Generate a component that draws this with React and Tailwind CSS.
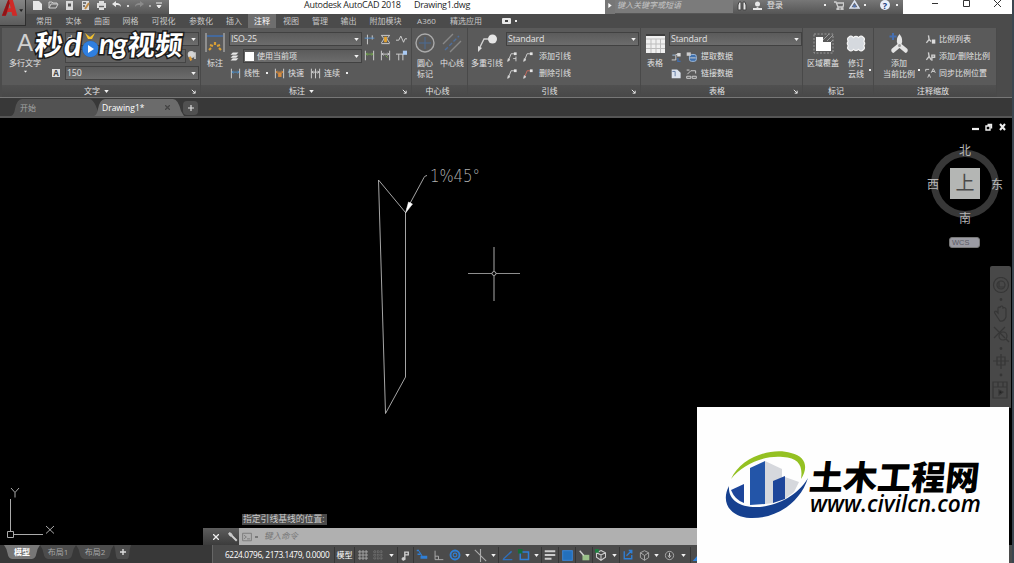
import { clsx } from "clsx";

const TABS = [
  ["常用", "w-[30px]"],
  ["实体", "w-[29px]"],
  ["曲面", "w-[28px]"],
  ["网格", "w-[29px]"],
  ["可视化", "w-[37px]"],
  ["参数化", "w-[38px]"],
  ["插入", "w-[28px]"],
  ["注释", "w-[28px]"],
  ["视图", "w-[30px]"],
  ["管理", "w-[28px]"],
  ["输出", "w-[29px]"],
  ["附加模块", "w-[45px]"],
  ["A360", "w-[37px]"],
  ["精选应用", "w-[42px]"],
];

function Ic({ className = "size-3", box = "0 0 16 16", children }) {
  return (
    <svg viewBox={box} className={clsx("shrink-0", className)} fill="none" stroke="#cfcfcf" strokeWidth="1.4">
      {children}
    </svg>
  );
}

function Caret({ className }) {
  return (
    <svg viewBox="0 0 6 4" className={clsx("h-[3px] w-[5px] shrink-0", className)}>
      <path d="M0 0h6L3 4z" fill="#f2f2f2" />
    </svg>
  );
}

function Corner() {
  return (
    <svg viewBox="0 0 6 6" className="size-[5px] shrink-0">
      <path d="M1 1l4 4M5 2v3H2" stroke="#e5e5e5" strokeWidth="1.2" fill="none" />
    </svg>
  );
}

function Combo({ className, children }) {
  return (
    <div
      className={clsx(
        "flex h-[14px] shrink-0 items-center border border-[#414141] bg-linear-to-b from-[#5b5b5b] to-[#6c6c6c] pl-px pr-[2px]",
        className
      )}
    >
      {children}
      <Caret className="ml-auto" />
    </div>
  );
}

function Style({ children }) {
  return <span className="text-[8.8px] tracking-[-0.02em]">{children}</span>;
}

function Panel({ width, title, menu, corner, children }) {
  return (
    <section className={clsx("flex h-full shrink-0 flex-col border-r border-[#494949]", width)}>
      <div className="flex h-[57px] bg-[#5a5a5a]">{children}</div>
      <div className="flex flex-1 items-center bg-linear-to-b from-[#505050] to-[#484848] pr-1">
        <div className="flex flex-1 items-center justify-center gap-1">
          {title}
          {menu && <Caret />}
        </div>
        {corner && <Corner />}
      </div>
    </section>
  );
}

function Big({ className, icon, lines, caret }) {
  return (
    <div className={clsx("flex shrink-0 flex-col items-center pt-1", className)}>
      <div className="flex h-[22px] items-center">{icon}</div>
      <div className="mt-[3px] text-center leading-[11px] whitespace-nowrap">
        {lines.map((l) => (
          <div key={l}>{l}</div>
        ))}
      </div>
      {caret && <Caret className="mt-[2px] scale-75" />}
    </div>
  );
}

function DimIcon({ accent = "#4d8fc9", className, children }) {
  return (
    <Ic className={clsx("size-[11px]", className)}>
      <path d="M2 1v14M14 1v14" />
      <path d="M3 6h10M5 4L3 6l2 2M11 4l2 2-2 2" stroke={accent} />
      {children}
    </Ic>
  );
}

function LeaderIcon({ red, bars }) {
  return (
    <Ic className="size-[11px]">
      <path d="M2 14L6 4h4" stroke={red ? "#c96b5d" : "#cfcfcf"} />
      <path d="M1 15l1-4 2 2z" fill="#e5e5e5" />
      <rect x="10" y="2" width="4" height="4" fill="#e5e5e5" stroke="none" />
      {bars && <path d="M13 8v7M9 11h4" />}
    </Ic>
  );
}

function QuickAccess() {
  return (
    <div className="flex h-full w-[144px] items-start gap-[5px] pt-px pl-[7px]">
      <Ic className="h-[9px] w-[11px]" box="0 0 11 9">
        <path d="M1 0h6l3 3v6H1z" fill="#e8e8e8" stroke="none" />
      </Ic>
      <Ic className="h-[8px] w-[11px]" box="0 0 11 8">
        <path d="M1 7V1h3l1 1h4v1M1 7l2-4h7L8 7z" strokeWidth="1" />
      </Ic>
      <Ic className="h-[9px] w-[11px]" box="0 0 11 9">
        <path d="M2 0h7v9H2z" fill="#dadada" stroke="none" />
        <path d="M4 4h3" stroke="#555" strokeWidth="3" />
      </Ic>
      <Ic className="h-[9px] w-[11px]" box="0 0 11 9">
        <path d="M2 0h7v9H2z" fill="#dadada" stroke="none" />
        <path d="M3 2h3M3 5h2" stroke="#555" />
        <path d="M5 8l4-6" stroke="#c08b45" strokeWidth="2" />
      </Ic>
      <Ic className="h-[9px] w-[11px]" box="0 0 11 9">
        <path d="M3 0h5v2h2v5H8v2H3V7H1V2h2z" fill="#dedede" stroke="none" />
        <path d="M3 5.500h5" stroke="#666" />
      </Ic>
      <Ic className="h-[8px] w-[10px]" box="0 0 10 8">
        <path d="M4 0L0 3l4 3V4c2 0 4 0 5 2 0-3-2-4-5-4z" fill="#e8e8e8" stroke="none" />
      </Ic>
      <span className="mt-1 size-[2px] bg-[#ddd]" />
      <Ic className="h-[8px] w-[10px]" box="0 0 10 8">
        <path d="M6 0l4 3-4 3V4C4 4 2 4 1 6c0-3 2-4 5-4z" fill="#8b8b8b" stroke="none" />
      </Ic>
      <span className="mt-1 size-[2px] bg-[#aaa]" />
      <Ic className="h-[8px] w-[6px]" box="0 0 6 8">
        <path d="M0 2h6M1 4.500h4L3 7z" fill="#eee" stroke="#eee" strokeWidth="1" />
      </Ic>
    </div>
  );
}

function TitleBar() {
  return (
    <header className="flex h-[14px] shrink-0 bg-linear-to-b from-[#777] to-[#555] pl-[25px]">
      <QuickAccess />
      <div className="flex w-[436px] bg-white pl-[135px] text-[9px] leading-[9px] whitespace-pre text-[#252525]">
        <span className="w-[110px] tracking-[-0.03em]">Autodesk AutoCAD 2018</span>
        <span className="tracking-[-0.035em]">Drawing1.dwg</span>
      </div>
      <div className="flex w-[298px] items-start">
        <div className="flex h-full w-[10px] justify-center bg-[#777] pt-[3px]">
          <svg viewBox="0 0 4 6" className="h-[5px] w-[4px]"><path d="M0 0l4 3-4 3z" fill="#fff" /></svg>
        </div>
        <div className="h-[13px] w-[118px] bg-[#7b7b7b] pl-[2px] leading-[10px] text-[#c5c5c5] italic">键入关键字或短语</div>
        <Ic className="mt-px ml-[4px] h-[10px] w-[10px]" box="0 0 10 10">
          <path d="M1 9V4l1-3h2v8zM9 9V4L8 1H6v8z" fill="#e6e6e6" stroke="#444" strokeWidth="1" />
        </Ic>
        <Ic className="mt-px ml-[6px] h-[10px] w-[9px]" box="0 0 9 10">
          <circle cx="4.500" cy="3" r="2.500" fill="#e6e6e6" stroke="none" />
          <path d="M0 9V7h3l1.500-1L6 7h3v2z" fill="#e6e6e6" stroke="none" />
        </Ic>
        <span className="ml-[5px] w-[57px] leading-[10px] text-[#e4e4e4]">登录</span>
        <span className="mt-[4px] size-[2px] bg-[#eee]" />
        <Ic className="mt-px ml-[8px] h-[9px] w-[10px]" box="0 0 10 9">
          <path d="M0 1h2l2 5h5l1-4H3" strokeWidth="1.300" />
          <circle cx="4" cy="8" r="1" /><circle cx="8" cy="8" r="1" />
        </Ic>
        <Ic className="ml-[5px] h-[10px] w-[11px]" box="0 0 11 10">
          <path d="M5.500 1L10 8H1z" stroke="#dfe6f4" strokeWidth="1.500" />
          <circle cx="5.500" cy="6" r="1.500" fill="#5574b0" stroke="none" />
        </Ic>
        <span className="mt-[4px] ml-[4px] size-[2px] bg-[#eee]" />
        <span className="ml-[14px] flex size-[10px] items-center justify-center rounded-full bg-[#e9eef8] text-[9px] leading-none font-bold text-[#23407e]">?</span>
        <span className="mt-[4px] ml-[6px] size-[2px] bg-[#eee]" />
      </div>
      <div className="flex w-[109px] items-start gap-[24px] bg-white pl-[29px] text-[#333]">
        <svg viewBox="0 0 7 8" className="h-[8px] w-[7px]"><path d="M0 3.500h6" stroke="currentColor" /></svg>
        <svg viewBox="0 0 7 8" className="h-[8px] w-[7px]"><path d="M.5.500h6v6h-6z" stroke="currentColor" fill="none" /></svg>
        <svg viewBox="0 0 7 8" className="h-[8px] w-[7px]"><path d="M0 0l7 7M7 0L0 7" stroke="currentColor" /></svg>
      </div>
    </header>
  );
}

function RibbonTabs() {
  return (
    <nav className="flex h-[14px] shrink-0 items-center bg-[#4b4b4b] pl-[29px] text-[#c9c9c9]">
      {TABS.map(([name, w]) => (
        <span
          key={name}
          className={clsx(
            "flex h-full shrink-0 items-center justify-center whitespace-nowrap",
            w,
            name === "注释" && "bg-[#6e6e6e] text-white"
          )}
        >
          {name}
        </span>
      ))}
      <Ic className="ml-[15px] h-[6px] w-[9px]" box="0 0 9 6">
        <rect width="9" height="6" rx="1" fill="#e8e8e8" stroke="none" />
        <rect x="3" y="2" width="3" height="2" fill="#444" stroke="none" />
      </Ic>
      <span className="ml-[4px] size-[2px] bg-[#eee]" />
    </nav>
  );
}

function Ribbon() {
  return (
    <div className="flex h-[70px] shrink-0 border-b border-[#777] bg-[#4b4b4b] pl-[2px]">
      <Panel width="w-[199px]" title="文字" menu corner>
        <Big
          className="w-[46px]"
          icon={<span className="font-['Liberation_Sans'] text-[24px] leading-none text-[#d0d0d0]">A</span>}
          lines={["多行文字"]}
          caret
        />
        <div className="flex flex-col gap-[3px] pt-[4px] pl-px">
          <div className="flex pl-[16px]">
            <Combo className="w-[134px] pl-[32px]"><Style>d</Style></Combo>
          </div>
          <div className="flex items-center pl-[16px]">
            <div className="h-[14px] w-[121px] border border-[#454545] bg-[#626262]" />
            <Ic className="size-[12px]">
              <circle cx="7" cy="6" r="4" fill="#d6d6d6" />
              <path d="M5 9l2 5" stroke="#d89a39" strokeWidth="3" />
              <path d="M12 3v9" stroke="#ddd" strokeWidth="2" />
            </Ic>
          </div>
          <div className="flex items-center">
            <span className="mr-[5px] ml-[3px] flex size-[8px] items-center justify-center bg-[#e0e0e0] text-[8px] leading-none font-bold text-[#444]">A</span>
            <Combo className="w-[134px] pl-[2px]"><Style>150</Style></Combo>
          </div>
        </div>
      </Panel>

      <Panel width="w-[211px]" title="标注" menu corner>
        <Big
          className="w-[28px]"
          icon={
            <Ic className="h-[20px] w-[20px]" box="0 0 20 20">
              <path d="M1 0v19M19 0v19" stroke="#a5a5a5" />
              <path d="M2 3h16" stroke="#44699c" strokeWidth="2" />
              <path d="M4 17l2-2M5 12l3 1M10 9v3M15 12l-3 1M16 17l-2-2" stroke="#d9a036" strokeWidth="2.200" />
            </Ic>
          }
          lines={["标注"]}
        />
        <div className="flex w-[133px] flex-col gap-[3px] pt-[4px]">
          <Combo className="w-[133px]"><Style>ISO-25</Style></Combo>
          <div className="flex items-center">
            <Ic className="mr-[4px] ml-[1px] size-[9px]">
              <path d="M5 1h10l-4 4H1zM5 6h10l-4 4H1zM5 11h10l-4 4H1z" fill="#e8e8e8" stroke="none" />
            </Ic>
            <Combo className="w-[119px]">
              <span className="mr-[3px] size-[9px] bg-white" />使用当前项
            </Combo>
          </div>
          <div className="flex h-[14px] items-center whitespace-nowrap">
            <DimIcon className="mr-[3px] ml-px" />线性
            <span className="mx-[6px] size-[2px] bg-[#eee]" />
            <DimIcon accent="#d88b3c" className="mr-[3px]"><rect x="6" y="7" width="5" height="6" fill="#d88b3c" stroke="none" /></DimIcon>快速
            <DimIcon accent="#cfcfcf" className="mr-[3px] ml-[6px]"><path d="M8 1v14" /></DimIcon>连续
            <span className="ml-[6px] size-[2px] bg-[#eee]" />
          </div>
        </div>
        <div className="grid h-[36px] grid-cols-3 grid-rows-2 items-center gap-x-[5px] pt-[3px] pl-[2px]">
          <Ic className="size-[11px]"><path d="M5 1v14M12 2v6" /><path d="M1 6h14" stroke="#5b94cf" /></Ic>
          <Ic className="size-[11px]">
            <path d="M2 2h12M2 14h12M2 2l4 5-4 6M14 2l-4 5 4 6" />
            <rect x="6" y="4" width="4" height="8" fill="#e5a32d" stroke="none" />
          </Ic>
          <Ic className="size-[11px]"><path d="M0 9h4l3-6 4 9 2-5h3" /></Ic>
          <DimIcon accent="#74a84d" />
          <DimIcon accent="#cfcfcf"><path d="M8 8l3 3" stroke="#74a84d" /></DimIcon>
          <Ic className="size-[11px]">
            <path d="M0 6h11M4 6v9M10 6v9" />
            <rect x="10" y="1" width="6" height="6" fill="#a9c9f2" stroke="none" />
          </Ic>
        </div>
      </Panel>

      <Panel width="w-[56px]" title="中心线">
        <Big
          className="w-[26px]"
          icon={
            <Ic className="size-[20px]" box="0 0 20 20">
              <circle cx="10" cy="10" r="9" stroke="#aaa" />
              <path d="M10 4v12M4 10h12" stroke="#4b6a94" strokeWidth="1" />
            </Ic>
          }
          lines={["圆心", "标记"]}
        />
        <Big
          className="w-[28px]"
          icon={
            <Ic className="h-[20px] w-[20px]" box="0 0 20 20">
              <path d="M1 11L11 1M8 19L19 8" stroke="#888" />
              <path d="M3 17L17 3" stroke="#4f6f9c" strokeDasharray="4 2" />
            </Ic>
          }
          lines={["中心线"]}
        />
      </Panel>

      <Panel width="w-[173px]" title="引线" corner>
        <Big
          className="w-[38px]"
          icon={
            <Ic className="h-[20px] w-[22px]" box="0 0 22 20">
              <path d="M3 16L8 6h6" />
              <path d="M2 19l0-6 4 2z" fill="#ddd" stroke="none" />
              <circle cx="16.500" cy="6" r="4.500" fill="#e6e6e6" stroke="none" />
            </Ic>
          }
          lines={["多重引线"]}
        />
        <div className="flex flex-col gap-[3px] pt-[4px]">
          <Combo className="w-[133px]"><Style>Standard</Style></Combo>
          <div className="flex h-[14px] items-center gap-[5px] pl-px"><LeaderIcon bars /><LeaderIcon /><span>添加引线</span></div>
          <div className="flex h-[14px] items-center gap-[5px] pl-px"><LeaderIcon /><LeaderIcon red /><span>删除引线</span></div>
        </div>
      </Panel>

      <Panel width="w-[162px]" title="表格" corner>
        <Big
          className="w-[28px]"
          icon={
            <Ic className="size-[19px]" box="0 0 19 19">
              <path d="M0 0h19v19H0z" fill="#f0f0f0" stroke="none" />
              <path d="M0 5h19M0 10h19M0 14.500h19M5 5v14M10 5v14M14.500 5v14" stroke="#bdbdbd" strokeWidth="1" />
              <path d="M0 1h19" stroke="#3e3e3e" strokeWidth="2" />
            </Ic>
          }
          lines={["表格"]}
        />
        <div className="flex flex-col gap-[3px] pt-[4px]">
          <Combo className="w-[133px]"><Style>Standard</Style></Combo>
          <div className="flex h-[14px] items-center gap-[4px] pl-[2px]">
            <Ic className="size-[11px]"><path d="M1 13h6V5h6" /><rect x="9" y="3" width="5" height="5" fill="#ddd" stroke="none" /><path d="M2 6h4" stroke="#9bbbe0" /><path d="M10 10v5h4" stroke="#426caa" strokeWidth="2" /></Ic>
            <Ic className="size-[11px]"><rect x="5" y="5" width="10" height="10" rx="3" fill="#3f70ad" stroke="#9ebce0" /><path d="M1 2h6v5H1z" fill="#ccc" stroke="none" /><path d="M6 10h8" /></Ic>
            <span>提取数据</span>
          </div>
          <div className="flex h-[14px] items-center gap-[4px] pl-[2px]">
            <Ic className="size-[11px]"><path d="M1 2h8l5 5v8H1z" fill="#dce3ee" stroke="none" /><path d="M2 5h4v7" stroke="#647da6" /></Ic>
            <Ic className="size-[11px]"><path d="M1 12h6v3H1zM9 12h6v3H9zM2 9l5-5h7v4" /><path d="M1 3h4" /></Ic>
            <span>链接数据</span>
          </div>
        </div>
      </Panel>

      <Panel width="w-[71px]" title="标记">
        <Big
          className="w-[40px]"
          icon={
            <Ic className="size-[21px]" box="0 0 21 21">
              <rect x="1" y="1" width="19" height="19" stroke="#999" strokeWidth="1" strokeDasharray="2 1.500" />
              <path d="M10 7l6-6M14 8l6-6M17 10l3-3" stroke="#999" strokeWidth="1" />
              <path d="M3 4h7v5h8v9H3z" fill="#fff" stroke="none" />
            </Ic>
          }
          lines={["区域覆盖"]}
        />
        <Big
          className="w-[26px]"
          icon={
            <Ic className="h-[17px] w-[20px]" box="0 0 20 17">
              <path
                d="M3 2q2-2 4.500.6 2.500-2.600 5 0 2.500-2.600 4.500-.6 2.500 1.500.7 4.200 2 2.300 0 4.600 1.800 2.700-.7 4.200-2 2-4.500-.6-2.500 2.600-5 0-2.500 2.600-4.500.6-2.500-1.500-.7-4.200-2-2.300 0-4.600Q.5 3.500 3 2z"
                fill="#d5d9de"
                stroke="#f4f4f4"
                strokeWidth="1.2"
              />
            </Ic>
          }
          lines={["修订", "云线"]}
        />
        <span className="mt-[41px] size-[2px] shrink-0 bg-[#eee]" />
      </Panel>

      <Panel width="w-[123px]" title="注释缩放">
        <Big
          className="ml-[7px] w-[36px]"
          icon={
            <Ic className="h-[21px] w-[20px]" box="0 0 20 21">
              <path d="M10.500 1q4 5 2 10l6 5q1 3-2 4l-6-5-6 5q-3-1-2-4l6-5q-2-5 2-10z" fill="#e4e4e4" stroke="none" />
              <circle cx="10.500" cy="12.500" r="1.500" fill="#999" stroke="none" />
              <path d="M4 0v7M.5 3.500h7" stroke="#466fb0" strokeWidth="2" />
            </Ic>
          }
          lines={["添加", "当前比例"]}
        />
        <span className="mt-[41px] ml-px size-[2px] shrink-0 bg-[#eee]" />
        <div className="flex flex-col gap-[3px] pt-[4px] pl-[5px] whitespace-nowrap">
          <div className="flex h-[14px] items-center gap-[3px]">
            <Ic className="size-[11px]"><path d="M5 2l1 6-4 5M6 8l3 3" strokeWidth="2" /><path d="M10 8h5v6h-5z" fill="#ddd" stroke="none" /></Ic>比例列表
          </div>
          <div className="flex h-[14px] items-center gap-[3px]">
            <Ic className="size-[11px]"><path d="M5 2l1 6-4 5M6 8l3 5" strokeWidth="2" /><path d="M10 14V6h4v3h-3" strokeWidth="2" /></Ic>添加/删除比例
          </div>
          <div className="flex h-[14px] items-center gap-[3px]">
            <Ic className="size-[11px]"><path d="M1 5V2h5M4 14l2-5 2 5" /><path d="M9 7l3-6 3 6M10 5h4" /></Ic>同步比例位置
          </div>
        </div>
      </Panel>
    </div>
  );
}

function FileTabs() {
  return (
    <div className="flex h-[20px] shrink-0 items-end border-b-2 border-[#555] bg-[#383838] pl-[11px]">
      <div className="relative flex h-[17px] w-[85px] items-center pl-[9px] text-[#a4a4a4]">
        <svg viewBox="0 0 88 17" className="absolute top-0 left-0 h-[17px] w-[88px]">
          <path d="M0 17Q3 16 4 10 6 0 11 0h67q6 0 10 17z" fill="#525252" />
        </svg>
        <span className="relative">开始</span>
      </div>
      <div className="relative flex h-[17px] w-[87px] items-center pl-[6px] text-[8.5px] text-white">
        <svg viewBox="0 0 90 17" className="absolute top-0 left-[-2px] h-[17px] w-[90px]">
          <path d="M0 17Q3 16 4 10 6 0 11 0h68q5 0 8 12l3 5z" fill="#6b6b6b" />
        </svg>
        <span className="relative pt-px">Drawing1*</span>
        <svg viewBox="0 0 6 6" className="relative ml-auto mr-[13px] size-[5px]"><path d="M0 0l6 6M6 0L0 6" stroke="#444" strokeWidth="1.500" /></svg>
      </div>
      <div className="mb-px flex h-[14px] w-[15px] items-center justify-center rounded bg-[#505050]">
        <svg viewBox="0 0 6 6" className="size-[6px]"><path d="M3 0v6M0 3h6" stroke="#ddd" strokeWidth="1.200" /></svg>
      </div>
    </div>
  );
}

function ViewCube() {
  return (
    <div className="absolute top-[26px] left-[926px] h-[106px] w-[78px] text-[12px] leading-none text-[#b5b5b5]">
      <svg viewBox="0 0 78 80" className="h-[80px] w-[78px]">
        <circle cx="39" cy="40" r="30.500" fill="none" stroke="#373737" strokeWidth="7" />
      </svg>
      <span className="absolute top-[1px] left-[33px]">北</span>
      <span className="absolute top-[35px] left-[1px]">西</span>
      <span className="absolute top-[35px] left-[65px]">东</span>
      <span className="absolute top-[69px] left-[33px]">南</span>
      <div className="absolute top-[24px] left-[24px] flex h-[31px] w-[30px] items-center justify-center bg-[#b4b6b4] text-[19px] text-[#4a4a4a]">上</div>
      <div className="absolute top-[93px] left-[23px] h-[11px] w-[31px] rounded-[3px] border border-[#777] bg-[#9b9ba3] pl-[2px] font-['Liberation_Sans'] text-[7.5px] leading-[10px] text-[#5b5b66]">WCS</div>
    </div>
  );
}

function NavBar() {
  return (
    <div className="absolute top-[148px] right-[1px] flex h-[142px] w-[21px] flex-col items-center rounded-t-[2px] bg-[#484848] pt-[11px]">
      <svg viewBox="0 0 21 125" className="h-[125px] w-[21px]" fill="none" stroke="#363636" strokeWidth="1.200">
        <circle cx="11" cy="8" r="7.500" /><circle cx="11" cy="8" r="4" /><path d="M9 5v5h5" />
        <circle cx="11" cy="22.500" r=".8" fill="#222" />
        <path d="M6 38q-3-4 0-4l2 2v-5q1-2 2 0v-1q2-2 3 0v1q2-1 3 1v8q-2 5-6 4z" />
        <path d="M4 50l11 11M15 50L4 61" /><circle cx="13" cy="59" r="4" /><path d="M16 62l3 3" />
        <circle cx="11" cy="71.500" r=".8" fill="#222" />
        <path d="M11 77v15M3 84h16M7 80h8v8H7z" /><circle cx="11" cy="98" r=".8" fill="#222" />
        <path d="M3 105h14v16H3zM3 110h14M8 105v5M13 105v5" /><path d="M9 113l4 2-4 3z" fill="#222" />
      </svg>
    </div>
  );
}

function Drawing() {
  return (
    <svg viewBox="0 118 1009 427" className="absolute inset-0 h-[427px] w-[1009px]" fill="none" stroke="#b8b8b8">
      <path d="M378.500 180L405.500 212.500V377L385.500 413.500z" strokeWidth=".9" />
      <path d="M407 209L424 177.500q1-2 3-2" strokeWidth=".9" />
      <path d="M405.500 213l3-11 4 2z" fill="#fff" stroke="#fff" strokeWidth=".5" />
      <path d="M468 273.500h24M496 273.500h24M494 247v24M494 276v25" stroke="#8e8e8e" strokeWidth="1.200" />
      <circle cx="494" cy="273.500" r="2" stroke="#aaa" />
      <path d="M10.500 499v32M14 534.500h29" stroke="#aaa" />
      <path d="M7.500 531.500h6v6h-6z" stroke="#aaa" />
      <path d="M11 488l4 4.500 4-4.500M15 492.500v5M46 526l8 7.500M54 526l-8 7.500" stroke="#aaa" />
      <text x="430" y="181.500" fill="#b0b0b0" stroke="none" fontSize="17" textLength="50" fontFamily="'DejaVu Sans Light','DejaVu Sans',sans-serif" fontWeight="200" lengthAdjust="spacingAndGlyphs">1%45°</text>
    </svg>
  );
}

function CommandLine() {
  return (
    <div className="absolute bottom-0 left-[203px] flex h-[17px] w-[806px] items-center bg-[#b0b0b0]">
      <div className="flex h-full w-[36px] items-center gap-[9px] bg-linear-to-b from-[#5d5d5d] to-[#3c3c3c] pl-[10px]">
        <svg viewBox="0 0 6 6" className="size-[6px]"><path d="M0 0l6 6M6 0L0 6" stroke="#eee" strokeWidth="1.300" /></svg>
        <Ic className="size-[10px]"><path d="M6 6l8 8" strokeWidth="3" /><path d="M2 1l3 1 2 3-2 2-3-2-1-3z" fill="#ccc" /></Ic>
      </div>
      <Ic className="ml-[3px] size-[10px]"><path d="M1 2h14v12H1zM3 5l4 3-4 3M8 11h5" stroke="#777" /></Ic>
      <span className="ml-[3px] h-[2px] w-[3px] bg-[#777]" />
      <span className="ml-[6px] text-[8.5px] text-[#777] italic">键入命令</span>
    </div>
  );
}

function Canvas() {
  return (
    <main className="relative h-[427px] shrink-0 overflow-hidden bg-black">
      <Drawing />
      <div className="absolute top-[5px] right-[6px] flex items-center gap-[6px]">
        <svg viewBox="0 0 8 8" className="size-[8px]"><path d="M1 6h7" stroke="#eee" strokeWidth="2.200" /></svg>
        <svg viewBox="0 0 8 8" className="size-[8px]" fill="none" stroke="#eee"><path d="M1 3h4v4H1zM2.500 1.500h4v4" strokeWidth="1.400" /></svg>
        <svg viewBox="0 0 7 8" className="h-[8px] w-[7px]"><path d="M1 1l5 6M6 1L1 7" stroke="#eee" strokeWidth="2" /></svg>
      </div>
      <ViewCube />
      <NavBar />
      <div className="absolute top-[396px] left-[242px] h-[11px] w-[85px] bg-[#4a4a4a] px-px text-[8.8px] leading-[11px] whitespace-nowrap text-[#c8c8c8]">指定引线基线的位置:</div>
      <CommandLine />
    </main>
  );
}

function LayoutTab({ active, className, children }) {
  return (
    <div className={clsx("relative flex h-[14px] items-center justify-center", active ? "font-bold text-white" : "text-[#a8a8a8]", className)}>
      <svg viewBox="0 0 40 13" preserveAspectRatio="none" className="absolute inset-0 h-full w-full">
        <path d="M0 0h40q-3 3-4 8t-5 5H9Q5 13 4 8T0 0z" fill={active ? "#777" : "#4c4c4c"} />
      </svg>
      <span className="relative">{children}</span>
    </div>
  );
}

function Cell({ className, sep, children }) {
  return (
    <span className={clsx("flex h-full shrink-0 items-center justify-center", sep && "border-l border-[#363636]", className)}>
      {children}
    </span>
  );
}

function StatusBar() {
  return (
    <footer className="flex h-[18px] shrink-0 bg-[#383838] pl-[4px]">
      <LayoutTab active className="w-[36px]">模型</LayoutTab>
      <LayoutTab className="w-[36px]">布局1</LayoutTab>
      <LayoutTab className="w-[38px]">布局2</LayoutTab>
      <LayoutTab className="w-[17px]">
        <svg viewBox="0 0 6 6" className="size-[6px]"><path d="M3 0v6M0 3h6" stroke="#ddd" strokeWidth="1.400" /></svg>
      </LayoutTab>
      <div className="ml-[81px] flex flex-1 items-center border-l border-[#666] bg-[#4b4b4b] pt-[2px]">
        <span className="w-[121px] pl-[12px] text-[8.3px] tracking-[-0.045em] whitespace-nowrap text-white">6224.0796, 2173.1479, 0.0000</span>
        <Cell sep className="w-[20px] text-white">模型</Cell>
        <Cell sep className="w-[16px]">
          <Ic className="size-[10px]"><path d="M3 0v16M8 0v16M13 0v16M0 3h16M0 8h16M0 13h16" stroke="#aaa" /></Ic>
        </Cell>
        <Cell className="w-[15px]">
          <Ic className="size-[10px]"><path d="M3 0v16M8 0v16M13 0v16M0 3h16M0 8h16M0 13h16" stroke="#777" strokeDasharray="2 1" /></Ic>
        </Cell>
        <Cell className="w-[12px]"><Caret /></Cell>
        <Cell sep className="w-[16px]">
          <Ic className="size-[11px]"><path d="M7 14V3h5v4H8" strokeWidth="2" /><circle cx="5" cy="13" r="2" fill="#ccc" /></Ic>
        </Cell>
        <Cell sep className="w-[17px]">
          <Ic className="size-[12px]"><path d="M1 2h3M2 7h4" stroke="#2f7fd6" strokeWidth="2" /><path d="M6 11h9" stroke="#2f7fd6" strokeWidth="4" /><path d="M4 3l4 6" stroke="#2f7fd6" /></Ic>
        </Cell>
        <Cell className="w-[16px]">
          <Ic className="size-[11px]"><path d="M3 1v13h12M3 9h5v5" stroke="#aaa" /></Ic>
        </Cell>
        <Cell className="w-[17px]">
          <Ic className="size-[12px]"><circle cx="8" cy="8" r="6" stroke="#2f7fd6" strokeWidth="2.500" /><circle cx="8" cy="8" r="2.500" stroke="#2f7fd6" /></Ic>
        </Cell>
        <Cell className="w-[9px]"><Caret /></Cell>
        <Cell className="w-[17px]">
          <Ic className="size-[13px]"><path d="M1 1l14 14M8 0v16" stroke="#aaa" /></Ic>
        </Cell>
        <Cell className="w-[9px]"><Caret /></Cell>
        <Cell sep className="w-[17px]">
          <Ic className="size-[11px]"><path d="M2 13L14 2M1 14h14" stroke="#2f6fbb" strokeWidth="2" /></Ic>
        </Cell>
        <Cell className="w-[17px]">
          <Ic className="size-[12px]"><path d="M3 4h11v10H3z" stroke="#2f7fd6" strokeWidth="2" /><path d="M0 0h6v6H0z" fill="#176c38" stroke="none" /></Ic>
        </Cell>
        <Cell className="w-[9px]"><Caret /></Cell>
        <Cell sep className="w-[17px]">
          <Ic className="size-[12px]"><path d="M1 3h14M1 8h14M1 13h9" stroke="#ccc" strokeWidth="2.500" /></Ic>
        </Cell>
        <Cell sep className="w-[17px]">
          <Ic className="size-[11px]"><rect x="1" y="1" width="14" height="14" fill="#2470bb" stroke="#3a86d8" /></Ic>
        </Cell>
        <Cell sep className="w-[17px]">
          <Ic className="size-[11px]"><rect x="5" y="7" width="10" height="8" fill="#9ac089" stroke="none" /><path d="M1 1l6 7" strokeWidth="2" /></Ic>
        </Cell>
        <Cell sep className="w-[17px]">
          <Ic className="size-[12px]"><path d="M8 2l6 3v6l-6 4-6-4V5zM2 5l6 3 6-3M8 8v7" /><path d="M0 0h5v5H0z" fill="#1d7d3e" stroke="none" /></Ic>
        </Cell>
        <Cell className="w-[10px]"><Caret /></Cell>
        <Cell sep className="w-[17px]">
          <Ic className="size-[12px]"><path d="M3 3v10h10V8M6 9l7-7M9 2h4v4" stroke="#2f7fd6" strokeWidth="1.800" /></Ic>
        </Cell>
        <Cell className="w-[16px]">
          <Ic className="size-[11px]"><path d="M8 1l6 3v7l-6 4-6-4V4zM2 4l6 4 6-4M8 8v7" stroke="#aaa" /></Ic>
        </Cell>
        <Cell className="w-[9px]"><Caret /></Cell>
        <Cell className="w-[17px]">
          <Ic className="size-[11px]"><circle cx="8" cy="8" r="6" stroke="#aaa" /><path d="M8 4v5M6 8l2 3 2-3" /></Ic>
        </Cell>
        <Cell className="w-[10px]"><Caret /></Cell>
        <Cell sep className="ml-[2px] w-[14px]">
          <Ic className="size-[11px]"><path d="M1 16L14 1v15z" fill="#2f7fd6" stroke="none" /></Ic>
        </Cell>
      </div>
    </footer>
  );
}

function VideoMark() {
  return (
    <div className="absolute top-[25px] left-[35px] flex h-[38px] font-['Noto_Sans_CJK_SC'] leading-[36px] font-bold text-white [paint-order:stroke_fill] [-webkit-text-stroke:3px_#1c1c1c]">
      <span className="w-[29px] -skew-x-6 text-[28px]">秒</span>
      <span className="w-[18px] font-['Lato'] text-[33px] font-bold italic">d</span>
      <svg viewBox="0 0 17 28" className="mt-[6px] h-[28px] w-[17px]">
        <path d="M3 2l5 4 5-4-3 6H6z" fill="#f0c02f" />
        <circle cx="8.500" cy="18" r="8" fill="#2f7fe0" stroke="#1d4f97" strokeWidth=".6" />
        <path d="M6 14l6 4-6 4z" fill="#fff" />
      </svg>
      <span className="w-[29px] font-['Lato'] text-[29px] font-bold tracking-[-0.06em] italic">ng</span>
      <span className="-skew-x-6 text-[27.5px]">视频</span>
    </div>
  );
}

function SiteLogo() {
  return (
    <div className="absolute bottom-0 left-[697px] flex h-[156px] w-[312px] bg-[#fefefe] pt-[43px] pl-[27px] text-black">
      <svg viewBox="0 0 86 70" className="h-[70px] w-[86px] shrink-0">
        <path d="M41 11l17 8v9l-8 4v21l-9 1zM61 27l14 5-5 10-9 7z" fill="#d6d8dd" />
        <path d="M7 40l13-6v19q-9-3-13-13z" fill="#1d459a" />
        <path d="M26 18l15-7v43l-15 1z" fill="#2355a8" />
        <path d="M49 31l12-5v23l-12 4z" fill="#1d459a" />
        <path d="M7 29C17 7 48-3 67 3c16 4 17 15 10 26 2-13-2-21-18-22C39 5 18 15 7 29z" fill="#94c122" />
        <path d="M5 36C-4 53 7 67 26 68c26 1 50-15 58-40C73 47 50 57 32 57 14 57 4 49 5 36z" fill="#16408f" />
      </svg>
      <div className="pt-[6px]">
        <div className="h-[37px] w-[176px] -skew-x-6 font-['Noto_Sans_CJK_SC'] text-[34px] leading-[40px] font-black whitespace-nowrap">土木工程网</div>
        <div className="font-['Open_Sans'] text-[22.6px] leading-[21px] font-semibold italic">www.civilcn.com</div>
      </div>
    </div>
  );
}

export default function App() {
  return (
    <div className="relative flex h-[563px] w-[1014px] overflow-hidden bg-[#3b4650] font-['Open_Sans','Noto_Sans_CJK_SC',sans-serif] text-[8px] leading-none text-[#e2e2e2]">
      <div className="flex w-[1012px] shrink-0 flex-col">
        <TitleBar />
        <RibbonTabs />
        <Ribbon />
        <FileTabs />
        <Canvas />
        <StatusBar />
      </div>
      <div className="absolute top-0 left-0 flex h-[26px] w-[26px] items-end justify-center border-r border-b border-[#2e2e2e] bg-linear-to-b from-[#858585] to-[#5c5c5c]">
        <svg viewBox="0 0 26 25" className="h-[25px] w-[26px]">
          <path d="M2 16L9-2h4l5 18h-5l-1-4H8l-2 4zM9 8h2l-1-5z" fill="#cf2a27" fillRule="evenodd" />
          <path d="M2 16L9-2l1 5-4 13z" fill="#8f1418" />
          <path d="M20 9h4l-2 3z" fill="#222" />
        </svg>
      </div>
      <VideoMark />
      <SiteLogo />
    </div>
  );
}
